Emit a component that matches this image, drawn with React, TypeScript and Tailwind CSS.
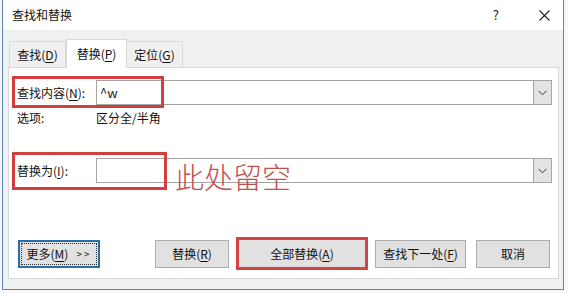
import React from 'react';

const font = { fontFamily: '"Noto Sans CJK SC", "Noto Sans", sans-serif' };

function Key({ k }: { k: string }) {
  return <span className="underline underline-offset-2">{k}</span>;
}

function Chevron() {
  return (
    <svg width="9" height="6" viewBox="0 0 9 6">
      <path d="M0.5 0.8 L4.5 4.8 L8.5 0.8" fill="none" stroke="#333" strokeWidth="1" />
    </svg>
  );
}

function Combo({ value }: { value?: string }) {
  return (
    <div className="flex h-[25px] flex-1 border border-[#a5a5a5] bg-white">
      <div className="flex flex-1 items-center pl-[3px] text-[13px] text-[#222]">{value}</div>
      <div className="flex w-[18px] items-center justify-center border-l border-[#a5a5a5] bg-[#e3e3e3]">
        <Chevron />
      </div>
    </div>
  );
}

function Btn({ children, className }: { children: React.ReactNode; className: string }) {
  return (
    <div className={`flex items-center justify-center bg-[#e1e1e1] text-[12px] text-[#111] ${className}`}>
      {children}
    </div>
  );
}

export default function App() {
  return (
    <div className="h-[293px] w-[568px] bg-[#f7f7f7] pl-[2px]" style={font}>
      <div className="relative flex h-[290px] w-[562px] flex-col border-x border-b border-[#5687b6] bg-[#f0f0f0]">
        {/* title bar */}
        <div className="flex h-[30px] items-center bg-white pl-[9px] text-[12px] text-[#111]">
          <span>查找和替换</span>
          <span className="ml-auto text-[13px]">?</span>
          <svg className="ml-[40px] mr-[13px]" width="11" height="11" viewBox="0 0 11 11">
            <path d="M0.5 0.5 L10.5 10.5 M10.5 0.5 L0.5 10.5" stroke="#222" strokeWidth="1.1" />
          </svg>
        </div>

        {/* tabs */}
        <div className="mt-[9px] flex items-end pl-[6px] text-[12px] text-[#111]">
          <div className="flex h-[26px] w-[57px] items-center justify-center border border-b-0 border-[#d9d9d9] bg-[#f0f0f0]">
            查找(<Key k="D" />)
          </div>
          <div className="z-10 -mb-px flex h-[29px] w-[61px] items-center justify-center border border-b-0 border-[#d9d9d9] bg-white">
            替换(<Key k="P" />)
          </div>
          <div className="flex h-[26px] w-[56px] items-center justify-center border border-b-0 border-l-0 border-[#d9d9d9] bg-[#f0f0f0]">
            定位(<Key k="G" />)
          </div>
        </div>

        {/* panel */}
        <div className="relative ml-[5px] h-[212px] w-[551px] border border-[#d9d9d9] bg-white pl-[8px] pr-[6px] text-[12px] text-[#111]">
          <div className="mt-[12px] flex items-center">
            <div className="w-[79px]">
              查找内容(<Key k="N" />):
            </div>
            <Combo value="^w" />
          </div>
          <div className="mt-[6px] flex h-[14px] items-center">
            <div className="w-[79px]">选项:</div>
            <div>区分全/半角</div>
          </div>
          <div className="mt-[33px] flex items-center">
            <div className="w-[79px]">
              替换为(<Key k="I" />):
            </div>
            <Combo />
          </div>

          <div className="mt-[54px] flex items-center">
            <div className="ml-[1px] flex h-[28px] w-[82px] items-center justify-center border-2 border-[#2a6fa8] bg-[#e1e1e1] p-px">
              <div className="flex h-full w-full items-center justify-center border border-dotted border-[#333]">
                更多(<Key k="M" />)<span className="ml-[8px] text-[10px] tracking-[2px]">&gt;&gt;</span>
              </div>
            </div>
            <Btn className="ml-[55px] h-[28px] w-[74px] border border-[#adadad]">
              替换(<Key k="R" />)
            </Btn>
            <Btn className="ml-[7px] h-[33px] w-[132px] border-[3px] border-[#d64242]">
              全部替换(<Key k="A" />)
            </Btn>
            <Btn className="ml-[7px] h-[28px] w-[91px] border border-[#adadad]">
              查找下一处(<Key k="F" />)
            </Btn>
            <Btn className="ml-[10px] h-[28px] w-[74px] border border-[#adadad]">取消</Btn>
          </div>

          {/* annotations */}
          <div className="absolute left-[3px] top-[8px] h-[32px] w-[152px] border-[3px] border-[#d33f3f]" />
          <div className="absolute left-[3px] top-[84px] h-[38px] w-[155px] border-[3px] border-[#d33f3f]" />
          <div className="absolute left-[166px] top-[91px] text-[29px] font-light leading-[34px] tracking-[0px] text-[#c4504e]">
            此处留空
          </div>
        </div>
      </div>
    </div>
  );
}
